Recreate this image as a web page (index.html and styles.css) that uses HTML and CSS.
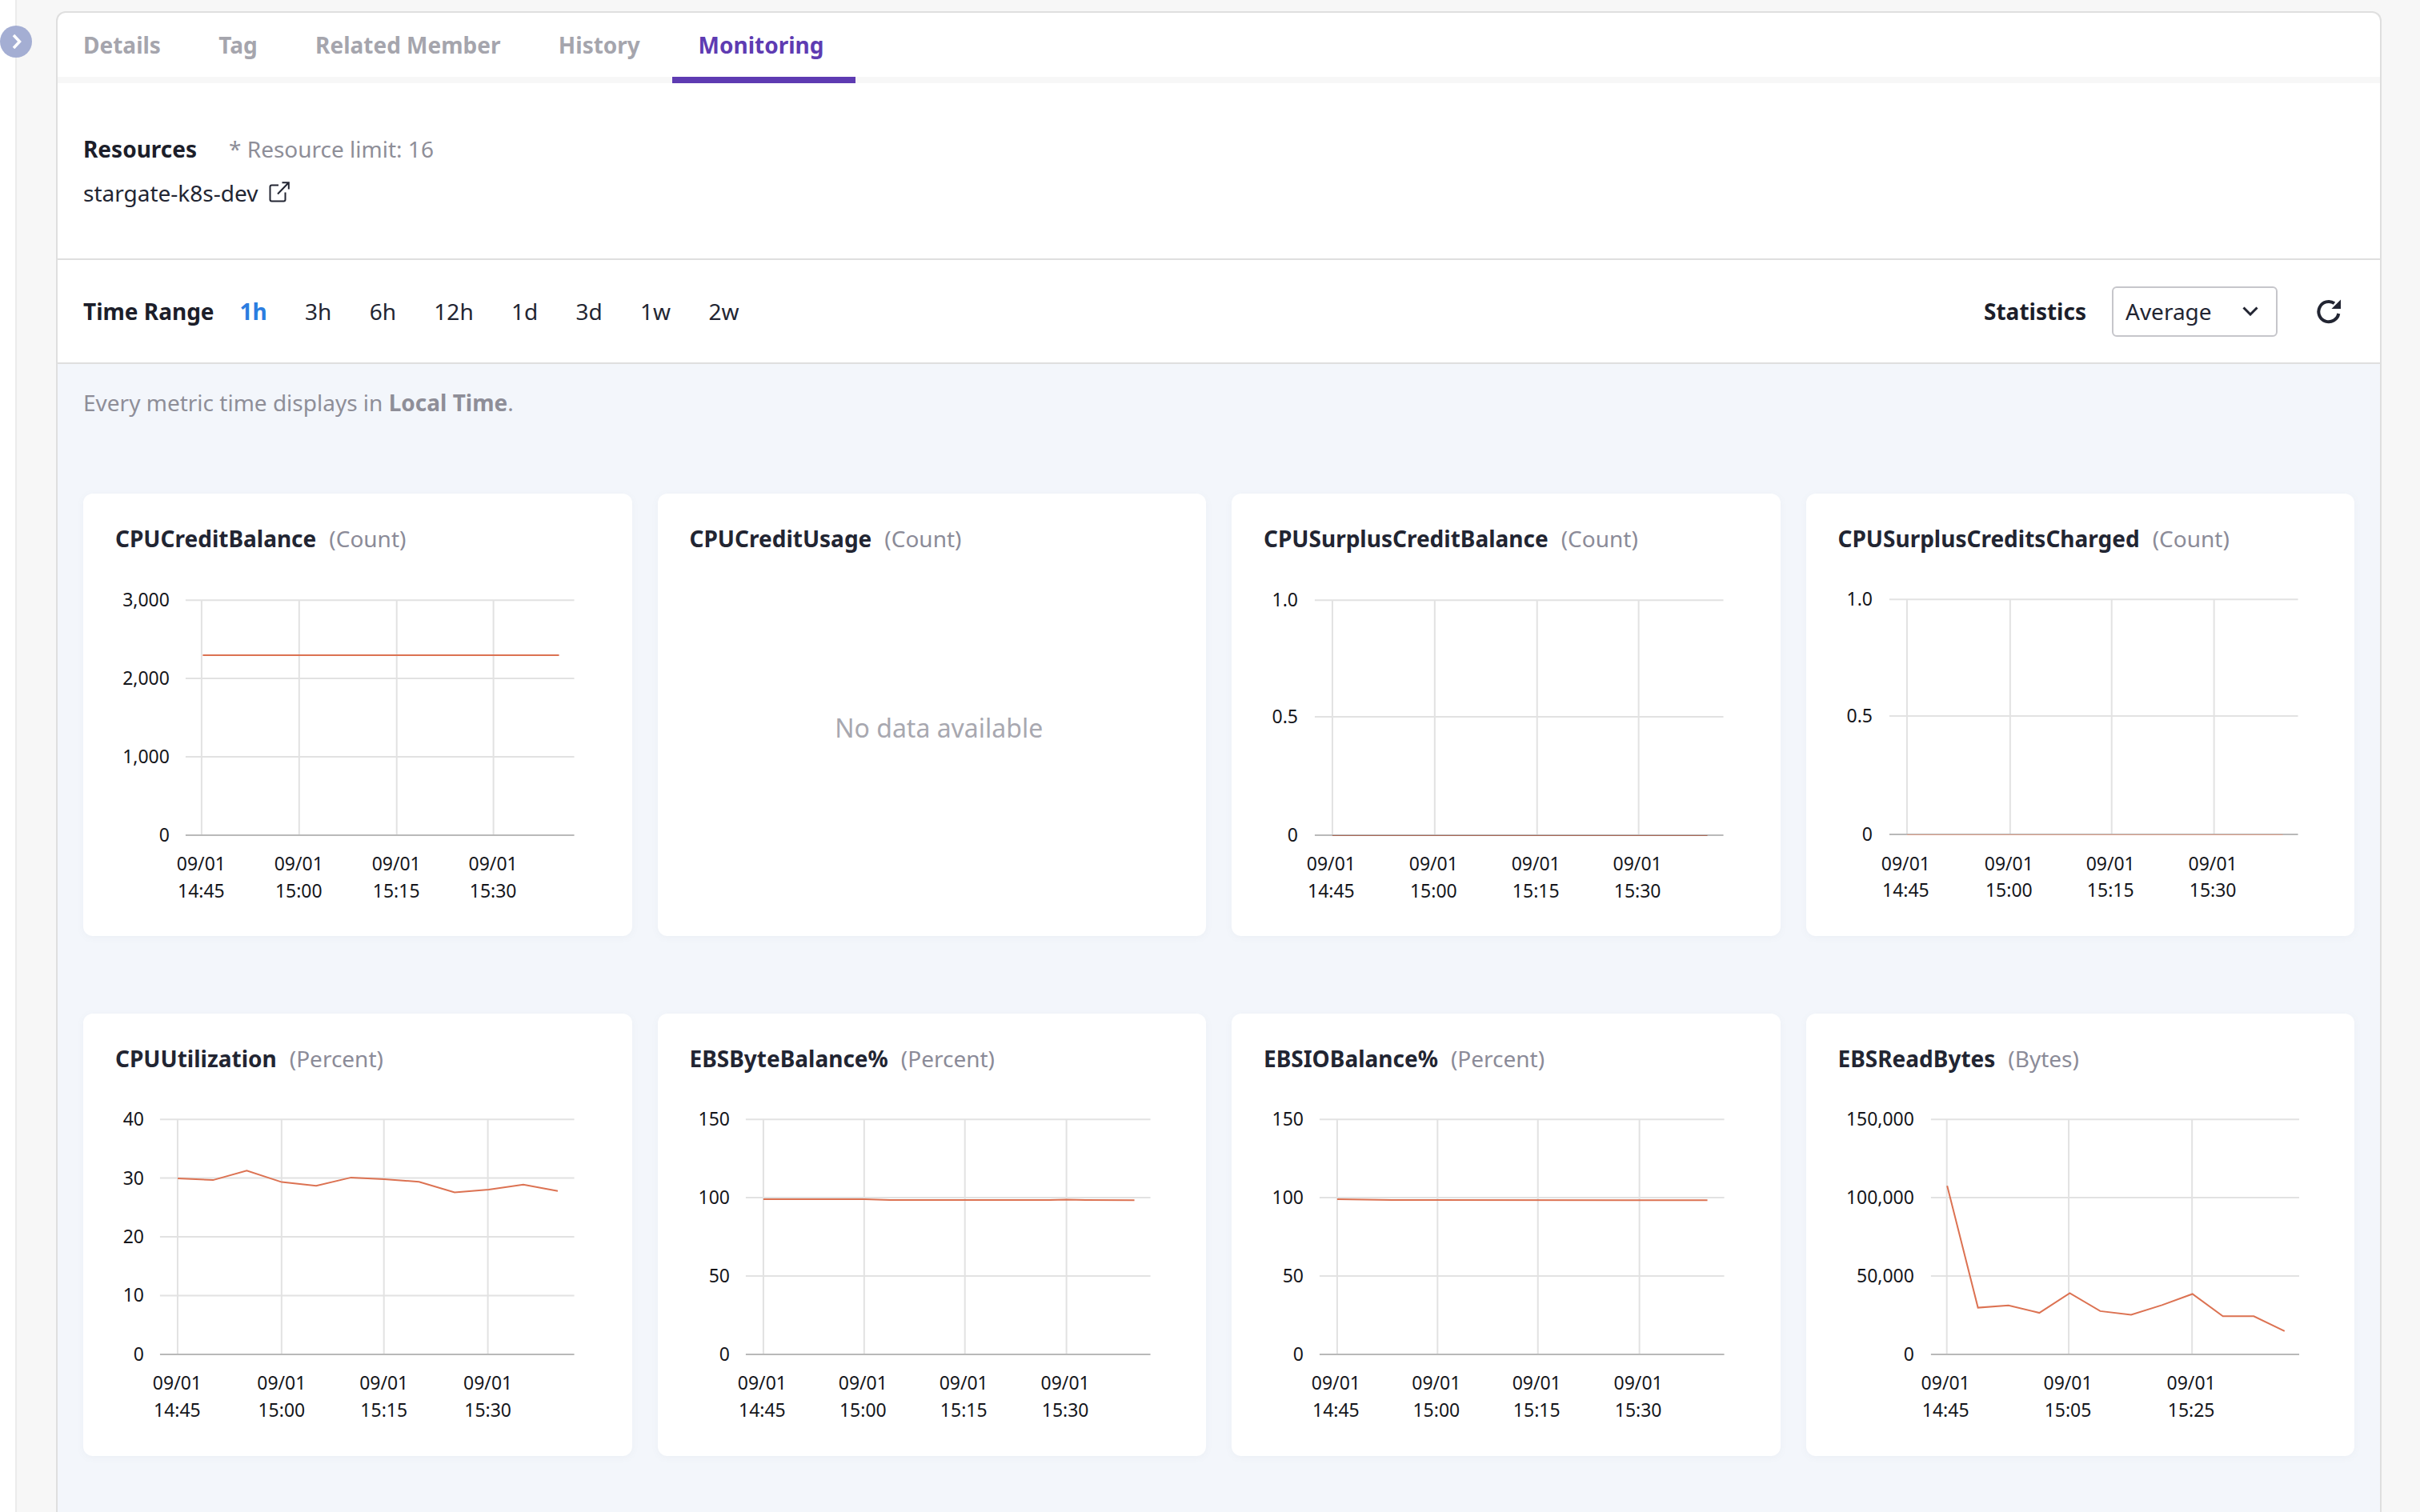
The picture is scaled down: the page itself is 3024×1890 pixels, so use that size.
FILE: index.html
```html
<!DOCTYPE html>
<html lang="en">
<head>
<meta charset="utf-8">
<title>Monitoring</title>
<link rel="stylesheet" href="styles.css">
</head>
<body>
<aside class="rail">
  <button class="rail-toggle" aria-label="Expand">
    <svg width="40" height="40" viewBox="0 0 40 40"><path class="rail-chevron" d="M17 12l7.5 8-7.5 8"/></svg>
  </button>
</aside>
<main class="page">
  <section class="panel">
    <nav class="tabs">
      <a class="tab">Details</a>
      <a class="tab">Tag</a>
      <a class="tab">Related Member</a>
      <a class="tab">History</a>
      <a class="tab tab-active">Monitoring</a>
    </nav>
    <div class="resources">
      <div class="resources-head">
        <strong class="resources-title">Resources</strong>
        <span class="resources-limit">* Resource limit: 16</span>
      </div>
      <div class="resources-link">
        <span>stargate-k8s-dev</span>
        <svg class="external" width="26" height="26" viewBox="0 0 26 26"><path d="M12 4.5H3.5a2 2 0 0 0-2 2v16a2 2 0 0 0 2 2h15a2 2 0 0 0 2-2v-9M11 15.5L24.5 1.5M16.5 1.2h8.3v8.3"/></svg>
      </div>
    </div>
    <div class="toolbar">
      <strong class="toolbar-label">Time Range</strong>
      <div class="ranges">
        <a class="range range-active">1h</a>
        <a class="range">3h</a>
        <a class="range">6h</a>
        <a class="range">12h</a>
        <a class="range">1d</a>
        <a class="range">3d</a>
        <a class="range">1w</a>
        <a class="range">2w</a>
      </div>
      <div class="toolbar-right">
        <strong class="toolbar-label">Statistics</strong>
        <div class="select">
          <span>Average</span>
          <svg width="20" height="12" viewBox="0 0 20 12"><path d="M1.5 1.5L10 10l8.5-8.5"/></svg>
        </div>
        <button class="refresh" aria-label="Refresh">
          <svg width="32" height="32" viewBox="0 0 32 32"><path class="refresh-arc" d="M23 6.2A12.6 12.6 0 1 0 28.3 19"/><path class="refresh-head" d="M31 1.5V13H19.5z"/></svg>
        </button>
      </div>
    </div>
    <div class="content">
      <p class="notice">Every metric time displays in <b>Local Time</b>.</p>
      <div class="cards">

        <article class="card">
          <h3 class="card-title">CPUCreditBalance<span class="unit">(Count)</span></h3>
          <svg class="chart" viewBox="0 113 686 440">
            <path class="grid" d="M128 133H614M128 231H614M128 329H614M148 133V427M270 133V427M392 133V427M513 133V427"/>
            <path class="axis" d="M128 427H614"/>
            <polyline class="series" points="149.500,202 595,202"/>
            <g class="ytick"><text x="108" y="141">3,000</text><text x="108" y="239">2,000</text><text x="108" y="337">1,000</text><text x="108" y="435">0</text></g>
            <g class="xtick"><text x="147.500" y="471">09/01</text><text x="147.500" y="505">14:45</text><text x="269.500" y="471">09/01</text><text x="269.500" y="505">15:00</text><text x="391.500" y="471">09/01</text><text x="391.500" y="505">15:15</text><text x="512.500" y="471">09/01</text><text x="512.500" y="505">15:30</text></g>
          </svg>
        </article>

        <article class="card">
          <h3 class="card-title">CPUCreditUsage<span class="unit">(Count)</span></h3>
          <div class="empty">No data available</div>
        </article>

        <article class="card">
          <h3 class="card-title">CPUSurplusCreditBalance<span class="unit">(Count)</span></h3>
          <svg class="chart" viewBox="0 113 686 440">
            <path class="grid" d="M104 133H615M104 279H615M126 133V427M254 133V427M382 133V427M509 133V427"/>
            <path class="axis" d="M104 427H615"/>
            <polyline class="series series-flat" points="126,427.500 595,427.500"/>
            <g class="ytick"><text x="83" y="141">1.0</text><text x="83" y="287">0.5</text><text x="83" y="435">0</text></g>
            <g class="xtick"><text x="124.500" y="471">09/01</text><text x="124.500" y="505">14:45</text><text x="252.500" y="471">09/01</text><text x="252.500" y="505">15:00</text><text x="380.500" y="471">09/01</text><text x="380.500" y="505">15:15</text><text x="507.500" y="471">09/01</text><text x="507.500" y="505">15:30</text></g>
          </svg>
        </article>

        <article class="card">
          <h3 class="card-title">CPUSurplusCreditsCharged<span class="unit">(Count)</span></h3>
          <svg class="chart" viewBox="0 113 686 440">
            <path class="grid" d="M104 132H615M104 278H615M126 132V426M255 132V426M382 132V426M510 132V426"/>
            <path class="axis" d="M104 426H615"/>
            <polyline class="series series-flat-light" points="126,426.500 596,426.500"/>
            <g class="ytick"><text x="83" y="140">1.0</text><text x="83" y="286">0.5</text><text x="83" y="434">0</text></g>
            <g class="xtick"><text x="124.500" y="471">09/01</text><text x="124.500" y="504">14:45</text><text x="253.500" y="471">09/01</text><text x="253.500" y="504">15:00</text><text x="380.500" y="471">09/01</text><text x="380.500" y="504">15:15</text><text x="508.500" y="471">09/01</text><text x="508.500" y="504">15:30</text></g>
          </svg>
        </article>

        <article class="card">
          <h3 class="card-title">CPUUtilization<span class="unit">(Percent)</span></h3>
          <svg class="chart" viewBox="0 113 686 440">
            <path class="grid" d="M96 132H614M96 205.500H614M96 279H614M96 352.500H614M118 132V426M248 132V426M376 132V426M506 132V426"/>
            <path class="axis" d="M96 426H614"/>
            <polyline class="series" points="118.200,205.900 162.300,208 204.500,196.200 248.200,210.500 291.300,215.100 335,204.800 376.300,206.900 419.900,210.100 464.400,223.400 507.100,219.800 550.300,213.700 593.400,221.600"/>
            <g class="ytick"><text x="76" y="140">40</text><text x="76" y="213.500">30</text><text x="76" y="287">20</text><text x="76" y="360.500">10</text><text x="76" y="434">0</text></g>
            <g class="xtick"><text x="117.500" y="470">09/01</text><text x="117.500" y="504">14:45</text><text x="248" y="470">09/01</text><text x="248" y="504">15:00</text><text x="376" y="470">09/01</text><text x="376" y="504">15:15</text><text x="506" y="470">09/01</text><text x="506" y="504">15:30</text></g>
          </svg>
        </article>

        <article class="card">
          <h3 class="card-title">EBSByteBalance%<span class="unit">(Percent)</span></h3>
          <svg class="chart" viewBox="0 113 686 440">
            <path class="grid" d="M110 132H616M110 230H616M110 328H616M132 132V426M258 132V426M384 132V426M511 132V426"/>
            <path class="axis" d="M110 426H616"/>
            <polyline class="series" points="132,232 258,232 290,233 490,233 511,232.500 535,233 596,233.300"/>
            <g class="ytick"><text x="90" y="140">150</text><text x="90" y="238">100</text><text x="90" y="336">50</text><text x="90" y="434">0</text></g>
            <g class="xtick"><text x="130.500" y="470">09/01</text><text x="130.500" y="504">14:45</text><text x="256.500" y="470">09/01</text><text x="256.500" y="504">15:00</text><text x="382.500" y="470">09/01</text><text x="382.500" y="504">15:15</text><text x="509.500" y="470">09/01</text><text x="509.500" y="504">15:30</text></g>
          </svg>
        </article>

        <article class="card">
          <h3 class="card-title">EBSIOBalance%<span class="unit">(Percent)</span></h3>
          <svg class="chart" viewBox="0 113 686 440">
            <path class="grid" d="M110 132H616M110 230H616M110 328H616M132 132V426M257.500 132V426M383 132V426M510 132V426"/>
            <path class="axis" d="M110 426H616"/>
            <polyline class="series" points="132,232 200,233 595,233.300"/>
            <g class="ytick"><text x="90" y="140">150</text><text x="90" y="238">100</text><text x="90" y="336">50</text><text x="90" y="434">0</text></g>
            <g class="xtick"><text x="130.500" y="470">09/01</text><text x="130.500" y="504">14:45</text><text x="256" y="470">09/01</text><text x="256" y="504">15:00</text><text x="381.500" y="470">09/01</text><text x="381.500" y="504">15:15</text><text x="508.500" y="470">09/01</text><text x="508.500" y="504">15:30</text></g>
          </svg>
        </article>

        <article class="card">
          <h3 class="card-title">EBSReadBytes<span class="unit">(Bytes)</span></h3>
          <svg class="chart" viewBox="0 113 686 440">
            <path class="grid" d="M156 132H616.500M156 230H616.500M156 328H616.500M175.800 132V426M328.300 132V426M482.500 132V426"/>
            <path class="axis" d="M156 426H616.500"/>
            <polyline class="series" points="176.300,215.100 214.800,367.600 253,364.800 291.500,374.100 329.600,349.400 367.700,371.900 406.300,376.600 444.900,364.400 483,350.500 521.100,378.400 559.700,378.400 598.200,396.900"/>
            <g class="ytick"><text x="135" y="140">150,000</text><text x="135" y="238">100,000</text><text x="135" y="336">50,000</text><text x="135" y="434">0</text></g>
            <g class="xtick"><text x="174.300" y="470">09/01</text><text x="174.300" y="504">14:45</text><text x="327.300" y="470">09/01</text><text x="327.300" y="504">15:05</text><text x="481.500" y="470">09/01</text><text x="481.500" y="504">15:25</text></g>
          </svg>
        </article>

      </div>
    </div>
  </section>
</main>
</body>
</html>
```

FILE: styles.css
```css
* { box-sizing: border-box; }
html, body { margin: 0; height: 100%; }
body {
  display: flex;
  height: 100vh;
  overflow: hidden;
  background: #f7f7f7;
  color: #222532;
  font-family: "Noto Sans", sans-serif;
  font-size: 28px;
}
.rail {
  position: relative;
  flex: 0 0 21px;
  background: #fff;
  border-right: 2px solid #ececec;
}
.rail-toggle {
  position: absolute;
  left: 0;
  top: 32px;
  width: 40px;
  height: 40px;
  padding: 0;
  border: 0;
  border-radius: 50%;
  background: #a4aed3;
  z-index: 1;
}
.rail-toggle svg { display: block; }
.rail-chevron { fill: none; stroke: #fff; stroke-width: 3.5; }
.page {
  flex: 1;
  min-width: 0;
  padding: 14px 48px 0 49px;
}
.panel {
  height: 100%;
  display: flex;
  flex-direction: column;
  background: #fff;
  border: 2px solid #dfdfdf;
  border-bottom: 0;
  border-radius: 12px 12px 0 0;
  overflow: hidden;
}
.tabs {
  display: flex;
  flex: 0 0 88px;
  padding-left: 32px;
  box-shadow: inset 0 -8px 0 #f7f7f7;
}
.tab {
  height: 88px;
  padding: 21px 36.2px 0;
  font-weight: 700;
  line-height: 38px;
  color: #a5a5ad;
  white-space: nowrap;
}
.tab:first-child { padding-left: 0; }
.tab-active {
  margin-left: 3.5px;
  padding: 21px 40px 0 33px;
  color: #5e3bb2;
  border-bottom: 8px solid #5e3bb2;
}
.resources {
  flex: 0 0 221px;
  padding: 63px 32px 0;
  border-bottom: 2px solid #dfdfdf;
}
.resources-head { display: flex; gap: 40px; line-height: 38px; }
.resources-title { font-weight: 700; color: #1c1e2a; }
.resources-limit { color: #8e8e98; }
.resources-link {
  display: flex;
  align-items: center;
  gap: 14px;
  margin-top: 16px;
  line-height: 40px;
}
.external { fill: none; stroke: #222532; stroke-width: 2; margin-top: -2px; }
.toolbar {
  flex: 0 0 130px;
  display: flex;
  align-items: center;
  padding: 0 30px 0 32px;
  border-bottom: 2px solid #dfdfdf;
}
.toolbar-label { font-weight: 700; color: #1c1e2a; }
.ranges { display: flex; gap: 47.3px; margin-left: 32px; }
.range { color: #222532; }
.range-active { color: #2b7de0; font-weight: 700; }
.toolbar-right { display: flex; align-items: center; margin-left: auto; }
.select {
  display: flex;
  align-items: center;
  justify-content: space-between;
  width: 207px;
  height: 63px;
  margin-left: 32px;
  padding: 0 22px 0 15px;
  border: 2px solid #c6c6cb;
  border-radius: 6px;
  font-size: 28px;
}
.select svg { fill: none; stroke: #222532; stroke-width: 3; }
.refresh {
  display: flex;
  align-items: center;
  justify-content: center;
  width: 68px;
  height: 50px;
  margin-left: 30px;
  padding: 0;
  border: 0;
  background: none;
}
.refresh-arc { fill: none; stroke: #222532; stroke-width: 4; }
.refresh-head { fill: #222532; }
.content {
  flex: 1;
  min-height: 0;
  padding: 28px 32px 0;
  background: #f3f6fb;
}
.notice {
  margin: 0 0 94px;
  line-height: 40px;
  color: #8e8e98;
}
.notice b { font-weight: 700; }
.cards {
  display: grid;
  grid-template-columns: repeat(4, 1fr);
  column-gap: 32px;
  row-gap: 97px;
}
.card {
  display: flex;
  flex-direction: column;
  height: 553px;
  background: #fff;
  border-radius: 12px;
  box-shadow: 0 2px 10px rgba(120, 130, 160, 0.06);
}
.card-title {
  flex: 0 0 113px;
  margin: 0;
  padding: 36px 40px 0;
  font-size: 28px;
  font-weight: 700;
  line-height: 40px;
  color: #222532;
  white-space: nowrap;
}
.unit {
  margin-left: 16px;
  font-weight: 400;
  color: #8b8b98;
}
.empty {
  flex: 1;
  padding: 158px 0 0 18px;
  text-align: center;
  font-size: 32px;
  line-height: 44px;
  color: #a8a8b0;
}
.chart {
  display: block;
  width: 100%;
  height: 440px;
}
.grid { fill: none; stroke: #e2e2e2; stroke-width: 2; }
.axis { fill: none; stroke: #b9b9b9; stroke-width: 2; }
.series { fill: none; stroke: #dc7252; stroke-width: 2; }
.series-flat { stroke: #a8614d; stroke-width: 1; }
.series-flat-light { stroke: #e0a08c; stroke-width: 1; }
.ytick, .xtick {
  font-family: "Noto Sans", sans-serif;
  font-size: 23px;
  fill: #14151a;
}
.ytick { text-anchor: end; }
.xtick { text-anchor: middle; }
```
